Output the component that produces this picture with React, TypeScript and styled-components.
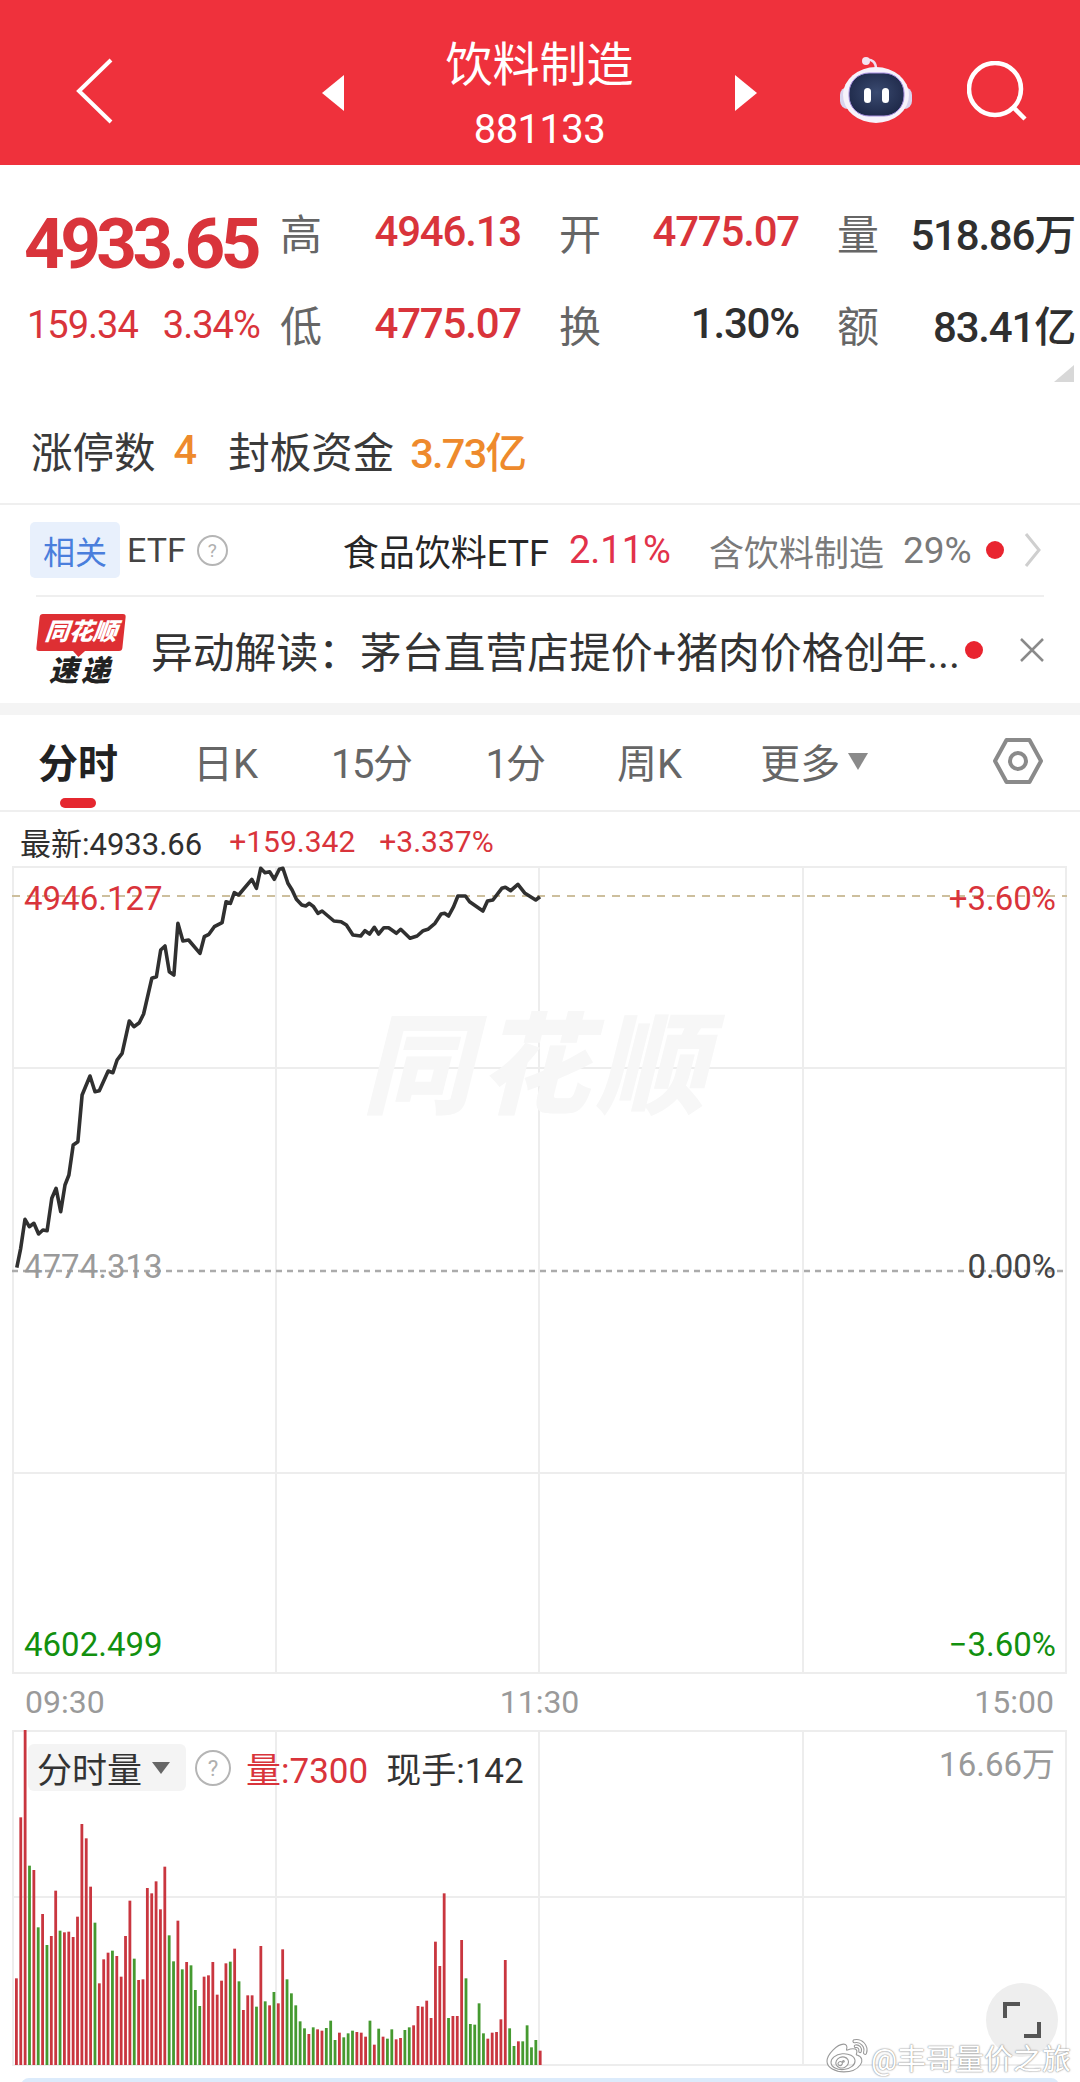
import React from 'react'
import styled, { createGlobalStyle } from 'styled-components'
import { FaWeibo } from 'react-icons/fa'

const RED = '#d9343b'
const GREEN = '#12900f'
const GREY = '#9a9a9a'
const DARK = '#2f2f2f'
const GRID = '#ededed'

const GlobalStyle = createGlobalStyle`
  html, body {
    margin: 0;
    padding: 0;
    background: #fff;
  }
  body {
    font-family: Roboto, "Noto Sans CJK SC", sans-serif;
    color: ${DARK};
  }
  * { box-sizing: border-box; }
`

const Page = styled.div`
  position: relative;
  width: 1080px;
  height: 2082px;
  overflow: hidden;
  background: #fff;
`

/* top bar */
const Header = styled.header`
  display: grid;
  grid-template-columns: 322px 22px 391px 22px 1fr;
  align-items: center;
  height: 165px;
  background: #ef313c;
  color: #fff;
`

const BackCell = styled.div`
  display: flex;
  align-items: center;
  padding: 16px 0 0 76px;
`

const Arrow = styled.span<{ $dir: 'left' | 'right' }>`
  display: block;
  width: 0;
  height: 0;
  margin-top: 20px;
  border-top: 18px solid transparent;
  border-bottom: 18px solid transparent;
  ${p => (p.$dir === 'left' ? 'border-right: 22px solid #fff;' : 'border-left: 22px solid #fff;')}
`

const TitleBox = styled.div`
  display: flex;
  flex-direction: column;
  align-items: center;
  padding-top: 22px;
`

const Title = styled.div`
  font-size: 47px;
  line-height: 64px;
  margin-top: -2px;
`

const Code = styled.div`
  font-size: 40px;
  line-height: 44px;
  margin-top: 11px;
  letter-spacing: -0.6px;
`

const HeaderTools = styled.div`
  display: flex;
  align-items: center;
  gap: 53px;
  padding: 16px 0 0 83px;
`

/* quote block */
const Quote = styled.section`
  position: relative;
  display: flex;
  padding-top: 20px;
  height: 204px;
`

const PriceBlock = styled.div`
  width: 280px;
  padding-left: 24px;
`

const BigPrice = styled.div`
  height: 92px;
  padding-top: 25px;
  font-size: 71px;
  line-height: 68px;
  font-weight: 700;
  letter-spacing: -4.6px;
  color: ${RED};
`

const Change = styled.div`
  display: flex;
  gap: 25px;
  height: 92px;
  padding: 2px 0 0 3px;
  font-size: 38px;
  line-height: 92px;
  letter-spacing: -1px;
  color: ${RED};
`

const StatGrid = styled.div`
  display: grid;
  grid-template-columns: 241px 240px 238px;
  grid-auto-rows: 92px;
  column-gap: 38px;
`

const Stat = styled.div`
  display: flex;
  align-items: center;
  justify-content: space-between;
`

const StatLabel = styled.span`
  font-size: 42px;
  color: #666;
`

const StatValue = styled.span<{ $up?: boolean }>`
  font-size: 42px;
  letter-spacing: -1.2px;
  font-weight: 500;
  color: ${p => (p.$up ? RED : DARK)};
`

const Corner = styled.span`
  position: absolute;
  right: 6px;
  bottom: -13px;
  width: 0;
  height: 0;
  border-left: 20px solid transparent;
  border-bottom: 17px solid #d8d8d8;
`

const LimitRow = styled.div`
  display: flex;
  align-items: center;
  height: 136px;
  padding: 27px 0 0 31px;
  border-bottom: 2px solid #efefef;
  font-size: 41.5px;
  color: #3a3a3a;
`

const Orange = styled.span<{ $gapLeft: number; $gapRight?: number }>`
  margin-left: ${p => p.$gapLeft}px;
  margin-right: ${p => p.$gapRight ?? 0}px;
  color: #ee8a2c;
  font-weight: 500;
  letter-spacing: -1.8px;
`

/* ETF row */
const EtfRow = styled.div`
  display: flex;
  align-items: center;
  height: 92px;
  margin: 0 36px;
  border-bottom: 2px solid #efefef;
`

const Tag = styled.span`
  display: flex;
  align-items: center;
  justify-content: center;
  width: 90px;
  height: 56px;
  margin-left: -6px;
  border-radius: 5px;
  background: #e8f0fc;
  color: #4a7edc;
  font-size: 32px;
`

const EtfLabel = styled.span`
  margin-left: 7px;
  font-size: 34px;
  color: #444;
`

const Help = styled.span<{ $size: number }>`
  display: inline-flex;
  align-items: center;
  justify-content: center;
  flex: none;
  width: ${p => p.$size}px;
  height: ${p => p.$size}px;
  border: 2px solid #b5b5b5;
  border-radius: 50%;
  color: #b0b0b0;
  font-size: ${p => p.$size * 0.62}px;
`

const EtfHelp = styled(Help)`
  margin-left: 11px;
`

const EtfName = styled.span`
  margin-left: 115px;
  font-size: 36px;
  color: #262626;
`

const EtfPct = styled.span`
  margin-left: 20px;
  font-size: 38px;
  color: #e2324a;
`

const EtfHold = styled.span`
  margin-left: 38px;
  font-size: 35px;
  color: #7a7a7a;
`

const EtfShare = styled.span`
  margin-left: 19px;
  font-size: 37px;
  color: #7a7a7a;
`

const Dot = styled.span<{ $gapLeft: number }>`
  flex: none;
  width: 18px;
  height: 18px;
  margin-left: ${p => p.$gapLeft}px;
  border-radius: 50%;
  background: #e9242f;
`

const EtfChevron = styled.svg`
  margin-left: 20px;
  flex: none;
`

/* news row */
const NewsRow = styled.div`
  display: flex;
  align-items: center;
  height: 106px;
  padding-left: 37px;
`

const Logo = styled.div`
  display: flex;
  flex-direction: column;
  align-items: center;
  width: 88px;
  flex: none;
`

const LogoBox = styled.div`
  position: relative;
  width: 86px;
  height: 37px;
  border-radius: 3px;
  background: #de2f33;
  transform: skewX(-6deg);
  color: #fff;
  font-size: 24px;
  line-height: 36px;
  font-weight: 900;
  font-style: italic;
  text-align: center;
  white-space: nowrap;

  &::after {
    content: '';
    position: absolute;
    left: 36px;
    bottom: -6px;
    border-left: 7px solid transparent;
    border-right: 7px solid transparent;
    border-top: 7px solid #de2f33;
  }
`

const LogoSub = styled.div`
  margin-top: 5px;
  font-size: 29px;
  line-height: 31px;
  font-weight: 900;
  font-style: italic;
  letter-spacing: 3px;
  color: #222;
`

const NewsText = styled.span`
  margin-left: 26px;
  width: 814px;
  flex: none;
  white-space: nowrap;
  font-size: 41.8px;
  color: #333;
`

const CloseIcon = styled.svg`
  margin-left: 37px;
  flex: none;
`

const Band = styled.div`
  height: 12px;
  background: #f4f4f4;
`

/* tabs */
const Tabs = styled.nav`
  position: relative;
  display: flex;
  align-items: center;
  height: 97px;
  padding: 0 37px 4px 38px;
  border-bottom: 2px solid #efefef;
`

const Tab = styled.span<{ $active?: boolean; $gap: number; $tight?: number }>`
  position: relative;
  flex: none;
  margin-right: ${p => p.$gap}px;
  font-size: 40px;
  letter-spacing: ${p => p.$tight ?? 0}px;
  font-weight: ${p => (p.$active ? 700 : 400)};
  color: ${p => (p.$active ? '#222' : '#666')};

  ${p =>
    p.$active &&
    `&::after {
      content: '';
      position: absolute;
      left: 22px;
      bottom: -18px;
      width: 36px;
      height: 10px;
      border-radius: 5px;
      background: #e5272f;
    }`}
`

const MoreArrow = styled.span`
  display: block;
  margin-top: 2px;
  border-left: 10px solid transparent;
  border-right: 10px solid transparent;
  border-top: 17px solid #8a8a8a;
`

const TabSettings = styled.svg`
  margin-left: auto;
  flex: none;
`

/* last price line */
const InfoRow = styled.div`
  display: flex;
  align-items: center;
  height: 55px;
  padding: 4px 0 0 20px;
  font-size: 31px;
  white-space: nowrap;
`

const InfoRed = styled.span<{ $gap: number }>`
  margin-left: ${p => p.$gap}px;
  font-size: 30px;
  color: ${RED};
`

/* charts */
const ChartPanel = styled.div<{ $height: number }>`
  position: relative;
  height: ${p => p.$height}px;
  margin-left: 12px;
  width: 1056px;

  svg {
    display: block;
  }
`

const AxisLabel = styled.span<{ $top: number; $right?: boolean; $color: string }>`
  position: absolute;
  top: ${p => p.$top}px;
  ${p => (p.$right ? 'right: 12px;' : 'left: 12px;')}
  font-size: 33px;
  line-height: 38px;
  color: ${p => p.$color};
`

const ChartMark = styled.span`
  position: absolute;
  left: 350px;
  top: 136px;
  font-size: 110px;
  line-height: 130px;
  font-weight: 900;
  font-style: italic;
  letter-spacing: 7px;
  color: #f7f7f7;
  white-space: nowrap;
`

const TimeRow = styled.div`
  display: flex;
  align-items: center;
  justify-content: space-between;
  height: 56px;
  padding: 0 26px 0 25px;
  font-size: 32px;
  color: ${GREY};
`

const VolumeHead = styled.div`
  position: absolute;
  left: 16px;
  top: 12px;
  display: flex;
  align-items: center;
  font-size: 35px;
  white-space: nowrap;
`

const VolumeChip = styled.div`
  display: flex;
  align-items: center;
  width: 158px;
  height: 47px;
  padding-left: 9px;
  border-radius: 6px;
  background: #f4f4f4;
  font-size: 35px;
  color: #333;
`

const ChipArrow = styled.span`
  margin-left: 10px;
  border-left: 9px solid transparent;
  border-right: 9px solid transparent;
  border-top: 12px solid #666;
`

const VolumeHelp = styled(Help)`
  margin-left: 9px;
`

const VolumeRed = styled.span`
  margin-left: 15px;
  color: ${RED};
`

const VolumeDark = styled.span`
  margin-left: 18px;
  color: #333;
`

const VolumeMax = styled.span`
  position: absolute;
  right: 13px;
  top: 8px;
  font-size: 33px;
  color: ${GREY};
`

const FullScreen = styled.div`
  position: absolute;
  right: 10px;
  top: 253px;
  display: flex;
  align-items: center;
  justify-content: center;
  width: 72px;
  height: 74px;
  border-radius: 50%;
  background: #eeeeee;
`

const Watermark = styled.div`
  position: absolute;
  left: 827px;
  top: 2036px;
  display: flex;
  align-items: center;
  gap: 4px;
  font-size: 29px;
  color: #fff;
  text-shadow: 0 0 2px #8d8d8d, 0 0 1px #8d8d8d;
  white-space: nowrap;

  svg {
    stroke: #9a9a9a;
    stroke-width: 14px;
    overflow: visible;
  }
`

const BottomStrip = styled.div`
  height: 8px;
  margin: 12px 21px 0;
  border-radius: 10px 10px 0 0;
  background: #dcebfb;
`

// price line, read from the picture (x / 2.8, y / 3 gives px inside the 560x460 crop at y=840)
const rawLine: [number, number][] = [
  [47, 1283], [58, 1225], [70, 1138], [82, 1160], [95, 1150], [108, 1182], [120, 1170], [132, 1172],
  [145, 1075], [157, 1045], [170, 1115], [182, 1035], [193, 1005], [205, 915], [218, 905], [230, 765],
  [252, 708], [266, 755], [278, 752], [303, 693], [316, 698], [328, 660], [342, 640], [362, 543],
  [375, 560], [390, 548], [402, 522], [425, 415], [438, 410], [450, 330], [462, 318], [474, 395],
  [487, 405], [498, 250], [512, 303], [528, 300], [560, 340], [572, 290], [585, 283], [600, 260],
  [622, 248], [633, 185], [645, 190], [656, 158], [668, 165], [705, 118], [718, 145], [730, 85],
  [742, 98], [755, 95], [768, 118], [782, 88], [792, 85], [806, 130], [818, 150], [830, 178],
  [845, 195], [856, 198], [866, 190], [878, 200], [890, 220], [902, 213], [935, 243], [955, 245],
  [970, 255], [988, 285], [1010, 288], [1022, 272], [1035, 282], [1048, 262], [1060, 282], [1075, 263],
  [1088, 263], [1110, 280], [1122, 268], [1148, 295], [1168, 288], [1185, 272], [1198, 268], [1218, 250],
  [1235, 222], [1245, 220], [1256, 228], [1270, 200], [1282, 168], [1303, 168], [1315, 185], [1352, 213],
  [1365, 183], [1380, 180], [1405, 145], [1415, 142], [1430, 152], [1450, 133], [1470, 160], [1500, 180],
  [1512, 170],
]

const linePoints = rawLine
  .map(([x, y]) => `${(x / 2.8 - 12).toFixed(1)},${(y / 3 + 840 - 867).toFixed(1)}`)
  .join(' ')

// one bar a minute, 09:30 - 11:30: top of the bar and r/g
const rawBars =
  '865r 382r 118r 527g 540r 712g 672r 765g 738r 602r 722g 727r 725r 741r 680r 402r 445r 590r 698g 880r ' +
  '808r 788r 782g 798r 860r 738r 632r 806g 870r 868r 594r 610r 574r 658r 530r 736g 814g 692r 838g 816r ' +
  '826g 900g 948g 860r 856r 816r 914r 872r 820r 815g 776r 874g 960r 916r 916r 950g 768r 934g 946r 906g ' +
  '940r 778r 868g 910g 946g 994g 1015g 1032r 1012g 1018r 1022r 1014g 992g 1050g 1028r 1042g 1030g 1022g 1026r 1028r ' +
  '1040r 992g 1064r 1016g 1040r 1046g 1018g 1048r 1044r 1020g 1012g 1006r 948r 950r 932r 984r 755r 828r 610r 984g ' +
  '978r 978r 750r 865g 1002g 1004g 940g 1030g 1046r 1028r 1026r 988r 810r 1015g 1068g 1054r 1054g 1006g 1072g 1050g 1082r'

const bars = rawBars.split(' ').map((item, i) => ({
  x: 16.4 + i * 4.365 - 12,
  height: (1125 - parseInt(item)) / 3,
  up: item.endsWith('r'),
}))

const VERTICALS = [1, 264, 527, 791, 1054]

const PriceChart = () => (
  <ChartPanel $height={807}>
    <ChartMark>同花顺</ChartMark>
    <svg width="1056" height="807" style={{ overflow: 'visible' }}>
      {VERTICALS.map(x => (
        <line key={x} x1={x} x2={x} y1={0} y2={806} stroke={GRID} strokeWidth="2" />
      ))}
      {[0, 201, 606, 806].map(y => (
        <line key={y} x1={0} x2={1055} y1={y} y2={y} stroke={GRID} strokeWidth="2" />
      ))}
      <line x1={0} x2={1055} y1={29} y2={29} stroke="#cdbf9d" strokeWidth="2" strokeDasharray="8 7" />
      <line x1={0} x2={1055} y1={404} y2={404} stroke="#ababab" strokeWidth="2.5" strokeDasharray="6 5" />
      <polyline points={linePoints} fill="none" stroke="#303030" strokeWidth="3.6" strokeLinejoin="round" />
    </svg>
    <AxisLabel $top={13} $color={RED}>4946.127</AxisLabel>
    <AxisLabel $top={13} $right $color={RED}>+3.60%</AxisLabel>
    <AxisLabel $top={381} $color={GREY}>4774.313</AxisLabel>
    <AxisLabel $top={381} $right $color="#444">0.00%</AxisLabel>
    <AxisLabel $top={759} $color={GREEN}>4602.499</AxisLabel>
    <AxisLabel $top={759} $right $color={GREEN}>−3.60%</AxisLabel>
  </ChartPanel>
)

const VolumeChart = () => (
  <ChartPanel $height={336}>
    <svg width="1056" height="336">
      {VERTICALS.map(x => (
        <line key={x} x1={x} x2={x} y1={0} y2={335} stroke={GRID} strokeWidth="2" />
      ))}
      {[1, 167, 335].map(y => (
        <line key={y} x1={0} x2={1055} y1={y} y2={y} stroke={GRID} strokeWidth="2" />
      ))}
      {bars.map(bar => (
        <rect
          key={bar.x}
          x={bar.x - 1.4}
          y={335 - bar.height}
          width="2.8"
          height={bar.height}
          fill={bar.up ? '#c9363f' : '#459a30'}
        />
      ))}
    </svg>
    <VolumeHead>
      <VolumeChip>
        分时量<ChipArrow />
      </VolumeChip>
      <VolumeHelp $size={36}>?</VolumeHelp>
      <VolumeRed>量:7300</VolumeRed>
      <VolumeDark>现手:142</VolumeDark>
    </VolumeHead>
    <VolumeMax>16.66万</VolumeMax>
    <FullScreen>
      <svg width="38" height="38" viewBox="0 0 38 38" fill="none" stroke="#555" strokeWidth="4">
        <path d="M2 17V3h15" />
        <path d="M36 21v14H21" />
      </svg>
    </FullScreen>
  </ChartPanel>
)

const Robot = () => (
  <svg width="74" height="68" viewBox="0 0 74 68">
    <defs>
      <radialGradient id="face" cx="50%" cy="45%" r="60%">
        <stop offset="0%" stopColor="#3a4a70" />
        <stop offset="100%" stopColor="#1d2747" />
      </radialGradient>
    </defs>
    <path d="M26 3c6-1 10 2 10 9" fill="none" stroke="#f0dff0" strokeWidth="2.5" />
    <circle cx="26" cy="4" r="4" fill="#f4e4f2" />
    <rect x="0" y="30" width="72" height="22" rx="8" fill="#d9d4ee" />
    <ellipse cx="36" cy="38" rx="33" ry="28" fill="#f6f2fb" />
    <rect x="9" y="16" width="55" height="43" rx="20" fill="url(#face)" stroke="#a78fe0" strokeWidth="1" />
    <rect x="24" y="31" width="7" height="15" rx="3.5" fill="#fff" />
    <rect x="42" y="31" width="7" height="15" rx="3.5" fill="#fff" />
  </svg>
)

const App = () => (
  <Page>
    <GlobalStyle />
    <Header>
      <BackCell>
        <svg width="38" height="66" viewBox="0 0 38 66" fill="none" stroke="#fff" strokeWidth="4">
          <path d="M35 2 3 33l32 31" />
        </svg>
      </BackCell>
      <Arrow $dir="left" />
      <TitleBox>
        <Title>饮料制造</Title>
        <Code>881133</Code>
      </TitleBox>
      <Arrow $dir="right" />
      <HeaderTools>
        <Robot />
        <svg width="60" height="60" viewBox="0 0 60 60" fill="none" stroke="#fff" strokeWidth="4.5">
          <circle cx="28" cy="28" r="26" />
          <path d="m47 47 11 11" />
        </svg>
      </HeaderTools>
    </Header>

    <Quote>
      <PriceBlock>
        <BigPrice>4933.65</BigPrice>
        <Change>
          <span>159.34</span>
          <span>3.34%</span>
        </Change>
      </PriceBlock>
      <StatGrid>
        <Stat><StatLabel>高</StatLabel><StatValue $up>4946.13</StatValue></Stat>
        <Stat><StatLabel>开</StatLabel><StatValue $up>4775.07</StatValue></Stat>
        <Stat><StatLabel>量</StatLabel><StatValue>518.86万</StatValue></Stat>
        <Stat><StatLabel>低</StatLabel><StatValue $up>4775.07</StatValue></Stat>
        <Stat><StatLabel>换</StatLabel><StatValue>1.30%</StatValue></Stat>
        <Stat><StatLabel>额</StatLabel><StatValue>83.41亿</StatValue></Stat>
      </StatGrid>
      <Corner />
    </Quote>

    <LimitRow>
      涨停数<Orange $gapLeft={18} $gapRight={33}>4</Orange>
      封板资金<Orange $gapLeft={16}>3.73亿</Orange>
    </LimitRow>

    <EtfRow>
      <Tag>相关</Tag>
      <EtfLabel>ETF</EtfLabel>
      <EtfHelp $size={31}>?</EtfHelp>
      <EtfName>食品饮料ETF</EtfName>
      <EtfPct>2.11%</EtfPct>
      <EtfHold>含饮料制造</EtfHold>
      <EtfShare>29%</EtfShare>
      <Dot $gapLeft={14} />
      <EtfChevron width="17" height="34" viewBox="0 0 17 34" fill="none" stroke="#cfcfcf" strokeWidth="3">
        <path d="m2 1 13 16L2 33" />
      </EtfChevron>
    </EtfRow>

    <NewsRow>
      <Logo>
        <LogoBox>同花顺</LogoBox>
        <LogoSub>速递</LogoSub>
      </Logo>
      <NewsText>{'异动解读\uFF1A茅台直营店提价+猪肉价格创年...'}</NewsText>
      <Dot $gapLeft={0} />
      <CloseIcon width="24" height="24" viewBox="0 0 24 24" fill="none" stroke="#8a8a8a" strokeWidth="2.5">
        <path d="m1 1 22 22M23 1 1 23" />
      </CloseIcon>
    </NewsRow>
    <Band />

    <Tabs>
      <Tab $active $gap={75}>分时</Tab>
      <Tab $gap={73}>日K</Tab>
      <Tab $gap={74} $tight={-1.5}>15分</Tab>
      <Tab $gap={73} $tight={-2}>1分</Tab>
      <Tab $gap={78}>周K</Tab>
      <Tab $gap={8}>更多</Tab>
      <MoreArrow />
      <TabSettings width="50" height="48" viewBox="0 0 50 48" fill="none" stroke="#8a8a8a" strokeWidth="4">
        <path d="M2 24 13.500 3h23L48 24 36.500 45h-23Z" strokeLinejoin="round" />
        <circle cx="25" cy="24" r="8" />
      </TabSettings>
    </Tabs>

    <InfoRow>
      最新:4933.66
      <InfoRed $gap={27}>+159.342</InfoRed>
      <InfoRed $gap={24}>+3.337%</InfoRed>
    </InfoRow>

    <PriceChart />
    <TimeRow>
      <span>09:30</span>
      <span>11:30</span>
      <span>15:00</span>
    </TimeRow>
    <VolumeChart />
    <BottomStrip />

    <Watermark>
      <FaWeibo size={40} color="#fff" />
      <span>@丰哥量价之旅</span>
    </Watermark>
  </Page>
)

export default App
